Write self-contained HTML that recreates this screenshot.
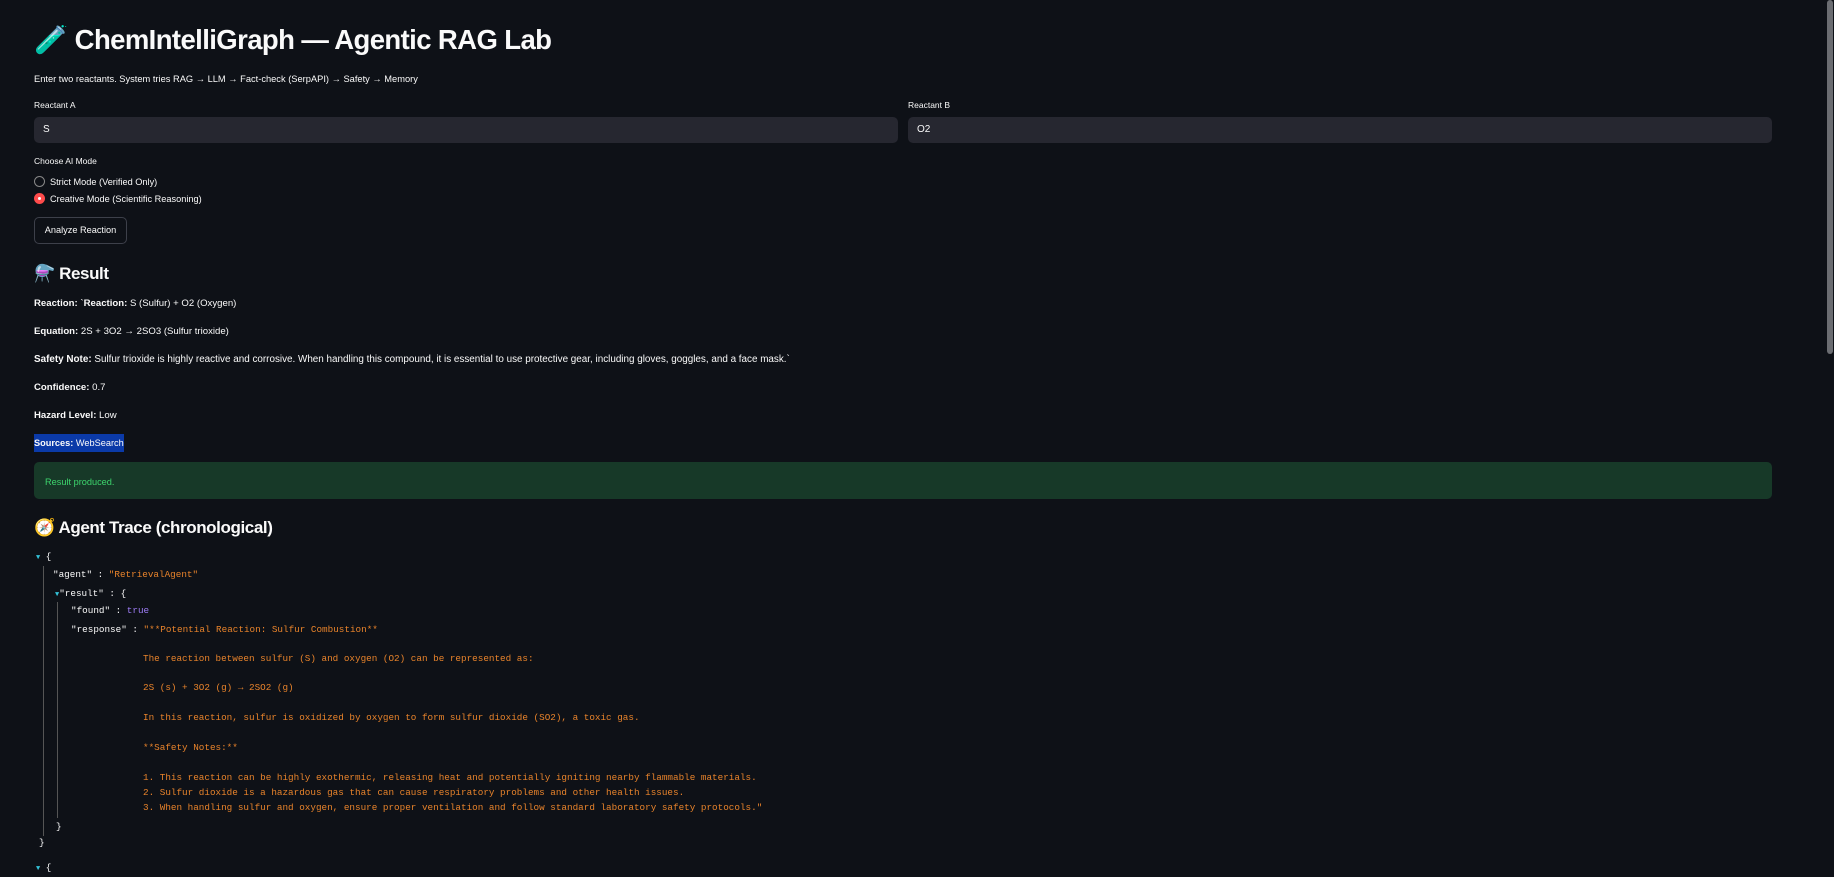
<!DOCTYPE html>
<html><head><meta charset="utf-8"><style>
body{margin:0;width:1834px;height:874px;background:#0e1117;color:#fafafa;font-family:"Liberation Sans","Noto Sans CJK SC",sans-serif;overflow:hidden;position:relative}
.a{position:absolute;white-space:nowrap}
.s{font-size:9.6px;line-height:12px}
.in{position:absolute;background:#262730;border-radius:5px;height:26px;top:117px;font-size:10px;line-height:26px;padding-left:9px;box-sizing:border-box}
.m{font-family:"Liberation Mono",monospace;font-size:9.3px;line-height:15px;position:absolute;white-space:pre;color:#fafafa}
.o{color:#e8832b}
.t{color:#33c3d9;font-size:7px}
b{font-weight:bold}
</style></head><body>
<div class="a" style="left:34px;top:22px;font-size:27.5px;font-weight:bold;line-height:36px;letter-spacing:-0.6px">🧪 ChemIntelliGraph — Agentic RAG Lab</div>
<div class="a s" style="left:34px;top:73px;font-size:9.3px">Enter two reactants. System tries RAG → LLM → Fact-check (SerpAPI) → Safety → Memory</div>
<div class="a s" style="left:34px;top:99px;font-size:8.5px">Reactant A</div>
<div class="a s" style="left:908px;top:99px;font-size:8.5px">Reactant B</div>
<div class="in" style="left:34px;width:864px">S</div>
<div class="in" style="left:908px;width:864px">O2</div>
<div class="a s" style="left:34px;top:155px;font-size:8.5px">Choose AI Mode</div>
<div class="a" style="left:34px;top:176px;width:9px;height:9px;border:1px solid #888;border-radius:50%"></div>
<div class="a s" style="left:50px;top:176px;font-size:9.2px">Strict Mode (Verified Only)</div>
<div class="a" style="left:34px;top:193px;width:11px;height:11px;background:#ff4b4b;border-radius:50%"><div style="margin:4px;width:3px;height:3px;background:#fff;border-radius:50%"></div></div>
<div class="a s" style="left:50px;top:193px;font-size:9.2px">Creative Mode (Scientific Reasoning)</div>
<div class="a s" style="left:34px;top:217px;width:91px;height:25px;border:1px solid #3d404a;border-radius:5px;text-align:center;line-height:25px;font-size:9.2px">Analyze Reaction</div>
<div class="a" style="left:34px;top:262px;font-size:17px;font-weight:bold;line-height:24px;letter-spacing:-0.4px">⚗️ Result</div>
<div class="a s" style="left:34px;top:298px"><b>Reaction:</b> `<b>Reaction:</b> S (Sulfur) + O2 (Oxygen)</div>
<div class="a s" style="left:34px;top:326px"><b>Equation:</b> 2S + 3O2 → 2SO3 (Sulfur trioxide)</div>
<div class="a s" style="left:34px;top:354px;font-size:9.9px"><b>Safety Note:</b> Sulfur trioxide is highly reactive and corrosive. When handling this compound, it is essential to use protective gear, including gloves, goggles, and a face mask.`</div>
<div class="a s" style="left:34px;top:382px"><b>Confidence:</b> 0.7</div>
<div class="a s" style="left:34px;top:410px"><b>Hazard Level:</b> Low</div>
<div class="a s" style="left:34px;top:434px;background:#0b3aa8;padding:3px 0;font-size:9.2px"><b>Sources:</b> WebSearch</div>
<div class="a" style="left:34px;top:462px;width:1738px;height:37px;background:#173928;border-radius:5px"></div>
<div class="a s" style="left:45px;top:476px;color:#3dd56d;font-size:9.2px">Result produced.</div>
<div class="a" style="left:34px;top:516px;font-size:17px;font-weight:bold;line-height:24px;letter-spacing:-0.4px">🧭 Agent Trace (chronological)</div>
<div class="a" style="left:43px;top:566px;width:1px;height:270px;background:#555"></div>
<div class="a" style="left:57px;top:602px;width:1px;height:216px;background:#555"></div>
<div class="m" style="left:36px;top:549px"><span class="t">▼</span> {</div>
<div class="m" style="left:53px;top:567px">"agent" : <span class="o">"RetrievalAgent"</span></div>
<div class="m" style="left:55px;top:586px"><span class="t">▼</span>"result" : {</div>
<div class="m" style="left:71px;top:603px">"found" : <span style="color:#9d7cf5">true</span></div>
<div class="m" style="left:71px;top:622px">"response" : <span class="o">"**Potential Reaction: Sulfur Combustion**</span></div>
<div class="m o" style="left:143px;top:651px">The reaction between sulfur (S) and oxygen (O2) can be represented as:</div>
<div class="m o" style="left:143px;top:680px">2S (s) + 3O2 (g) → 2SO2 (g)</div>
<div class="m o" style="left:143px;top:710px">In this reaction, sulfur is oxidized by oxygen to form sulfur dioxide (SO2), a toxic gas.</div>
<div class="m o" style="left:143px;top:740px">**Safety Notes:**</div>
<div class="m o" style="left:143px;top:770px">1. This reaction can be highly exothermic, releasing heat and potentially igniting nearby flammable materials.
2. Sulfur dioxide is a hazardous gas that can cause respiratory problems and other health issues.
3. When handling sulfur and oxygen, ensure proper ventilation and follow standard laboratory safety protocols."</div>
<div class="m" style="left:56px;top:819px">}</div>
<div class="m" style="left:39px;top:835px">}</div>
<div class="m" style="left:36px;top:860px"><span class="t">▼</span> {</div>
<div class="a" style="left:1827px;top:0;width:6px;height:354px;background:#6b6d72;border-radius:3px"></div>
</body></html>
